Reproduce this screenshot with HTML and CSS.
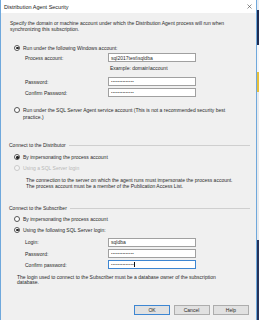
FILE: index.html
```html
<!DOCTYPE html>
<html>
<head>
<meta charset="utf-8">
<link rel="stylesheet" href="styles.css">
</head>
<body>
<div class="screen">
  <div class="dialog">
    <div class="titlebar">
      <span class="title">Distribution Agent Security</span>
      <svg class="close" width="5" height="5" viewBox="0 0 5 5"><path d="M0.5 0.5L4.5 4.5M4.5 0.5L0.5 4.5" stroke="#444" stroke-width="0.6" fill="none"/></svg>
    </div>
    <div class="body">
      <p class="intro">Specify the domain or machine account under which the Distribution Agent process will run when<br>synchronizing this subscription.</p>

      <div class="radio r-win"><span class="dot on"></span><span>Run under the following Windows account:</span></div>
      <div class="field f-proc"><span class="label">Process account:</span><span class="input">sql2017test\sqldba</span></div>
      <div class="hint">Example: domain\account</div>
      <div class="field f-pw"><span class="label">Password:</span><span class="input pw">••••••••••••••</span></div>
      <div class="field f-next"><span class="label">Confirm Password:</span><span class="input pw">••••••••••••••</span></div>

      <div class="radio multi r-agent"><span class="dot"></span><span>Run under the SQL Server Agent service account (This is not a recommended security best<br>practice.)</span></div>

      <div class="group g-dist"><span>Connect to the Distributor</span><span class="rule"></span></div>
      <div class="radio r-d1"><span class="dot on"></span><span>By impersonating the process account</span></div>
      <div class="radio disabled r-d2"><span class="dot"></span><span>Using a SQL Server login</span></div>
      <p class="note note-dist">The connection to the server on which the agent runs must impersonate the process account.<br>The process account must be a member of the Publication Access List.</p>

      <div class="group g-sub"><span>Connect to the Subscriber</span><span class="rule"></span></div>
      <div class="radio r-s1"><span class="dot"></span><span>By impersonating the process account</span></div>
      <div class="radio r-s2"><span class="dot on"></span><span>Using the following SQL Server login:</span></div>
      <div class="field f-login"><span class="label">Login:</span><span class="input">sqldba</span></div>
      <div class="field f-next"><span class="label">Password:</span><span class="input pw">••••••••••••••</span></div>
      <div class="field f-next"><span class="label">Confirm password:</span><span class="input pw focus">••••••••••••••<span class="caret"></span></span></div>
      <p class="note note-sub">The login used to connect to the Subscriber must be a database owner of the subscription<br>database.</p>
    </div>
    <div class="buttons">
      <span class="btn default">OK</span>
      <span class="btn">Cancel</span>
      <span class="btn">Help</span>
    </div>
  </div>
  <div class="backdrop">
    <span class="seg s1"></span>
    <span class="seg s2"></span>
    <span class="seg s3"></span>
    <span class="seg s4"></span>
    <span class="seg s5"></span>
    <span class="seg s6"></span>
  </div>
</div>
</body>
</html>
```

FILE: styles.css
```css
* { box-sizing: border-box; }
html, body { margin: 0; padding: 0; }
body {
  width: 259px;
  height: 320px;
  overflow: hidden;
  font-family: "Liberation Sans", Arial, sans-serif;
  font-size: 5px;
  color: #2a2a2a;
}
p { margin: 0; }

.screen {
  display: flex;
  width: 259px;
  height: 320px;
}

.dialog {
  width: 257px;
  height: 320px;
  background: #f0f0f0;
  border-left: 1px solid #6fa8dc;
  border-right: 1px solid #6fa8dc;
  display: flex;
  flex-direction: column;
}

.titlebar {
  height: 13px;
  background: #ffffff;
  display: flex;
  align-items: center;
  justify-content: space-between;
  padding: 0 4px 0 3px;
  font-size: 5.5px;
  color: #1a1a1a;
}
.close { display: block; margin-top: -1px; }

.body {
  padding: 0 6px 0 9px;
  display: flex;
  flex-direction: column;
}

.intro { margin-top: 8px; line-height: 5.7px; }

.radio {
  display: flex;
  align-items: center;
  height: 6px;
  line-height: 6px;
  gap: 3px;
}
.radio .dot {
  flex: none;
  width: 6px;
  height: 6px;
  margin-left: 4px;
  border: 0.6px solid #555;
  border-radius: 50%;
  background: #fff;
  position: relative;
}
.radio .dot.on::after {
  content: "";
  position: absolute;
  left: 1.2px; top: 1.2px;
  width: 2.4px; height: 2.4px;
  border-radius: 50%;
  background: #222;
}
.radio.disabled { color: #b8b8b8; }
.radio.disabled .dot { border-color: #cacaca; background: #f4f4f4; }
.radio.multi {
  height: auto;
  align-items: flex-start;
  line-height: 6.2px;
}
.radio.multi .dot { margin-top: 0.1px; }

.r-win { margin-top: 12.3px; }
.r-agent { margin-top: 10px; }
.r-d1 { margin-top: 5.7px; }
.r-d2 { margin-top: 5.3px; }
.r-s1 { margin-top: 5px; }
.r-s2 { margin-top: 4.3px; }

.field {
  display: flex;
  align-items: center;
  height: 9px;
  margin-left: 15px;
}
.field .label { width: 83px; flex: none; }
.field .input {
  width: 88px;
  height: 9px;
  background: #fff;
  border: 0.8px solid #a0a0a0;
  padding-left: 2px;
  display: flex;
  align-items: center;
  line-height: 6px;
  color: #2a2a2a;
}
.field .input.pw { letter-spacing: 0.1px; font-size: 4.4px; color: #444; }
.field .input.focus { border-color: #3d86d2; }
.caret {
  display: inline-block;
  width: 0.7px;
  height: 5px;
  background: #111;
  margin-left: 0.3px;
}

.f-proc { margin-top: 2.3px; }
.f-pw { margin-top: 6.5px; }
.f-next { margin-top: 2.3px; }
.f-login { margin-top: 5.2px; }

.hint {
  margin-left: 100px;
  margin-top: 2.5px;
  height: 6px;
  line-height: 6px;
}

.group {
  display: flex;
  align-items: center;
  gap: 3px;
  height: 6px;
  line-height: 6px;
  margin-left: -1px;
}
.group .rule {
  flex: 1;
  height: 0;
  border-top: 0.8px solid #cfcfcf;
}
.g-dist { margin-top: 22.7px; }
.g-sub { margin-top: 15.4px; }

.note { line-height: 5.7px; }
.note-dist { margin-left: 16px; margin-top: 7.1px; }
.note-sub { margin-left: 7px; margin-top: 5.3px; }

.buttons {
  margin-top: 18.7px;
  display: flex;
  justify-content: flex-end;
  gap: 3.5px;
  padding-right: 7px;
}
.btn {
  width: 36px;
  height: 10.5px;
  border: 0.8px solid #adadad;
  background: #e1e1e1;
  display: flex;
  align-items: center;
  justify-content: center;
  color: #2a2a2a;
}
.btn.default { border-color: #3d86d2; }

.backdrop {
  width: 2px;
  height: 320px;
  display: flex;
  flex-direction: column;
}
.seg { display: block; }
.s1 { height: 10px; background: #e9edf3; }
.s2 { height: 35px; background: #1f2d52; }
.s3 { height: 27px; background: #f4f6f9; }
.s4 { height: 20px; background: #e6bf3c; }
.s5 { height: 148px; background: #e8eaed; }
.s6 { height: 80px; background: #25335a; }
```
